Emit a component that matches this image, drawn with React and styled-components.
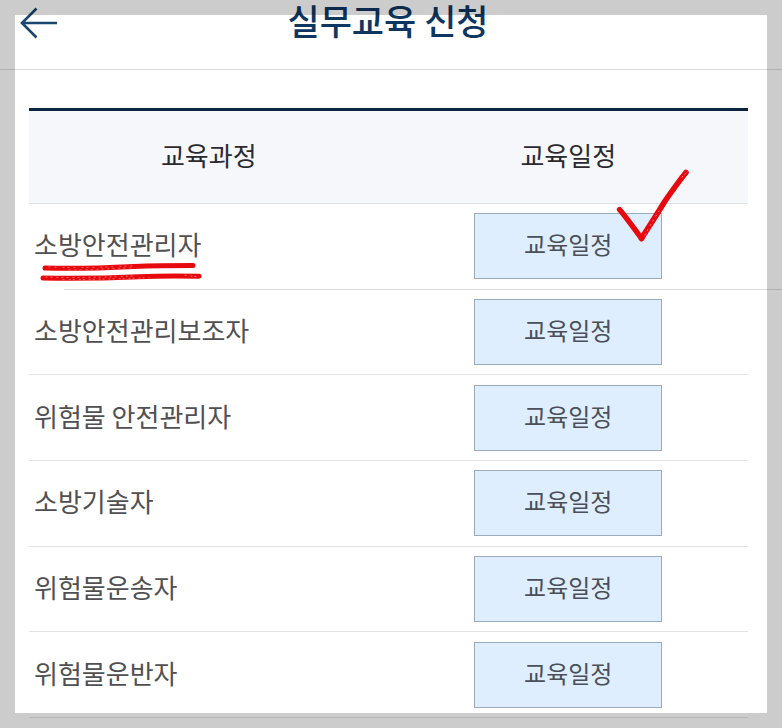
import React from 'react';
import styled, { createGlobalStyle, css } from 'styled-components';

const GlobalStyle = createGlobalStyle`
    * {
        box-sizing: border-box;
    }

    body {
        margin: 0;
        background: #fff;
        color: #505052;
        font-family: "Noto Sans CJK KR", "Noto Sans", sans-serif;
    }
`;

const Page = styled.div`
    position: relative;
    min-height: 100vh;
`;

const Frame = styled.div`
    position: absolute;
    inset: 0;
    border: 15px solid rgba(0, 0, 0, 0.2);
    pointer-events: none;
`;

const Header = styled.header`
    display: grid;
    grid-template-columns: 60px 1fr 60px;
    height: 70px;
    padding: 0 14px 0 8px;
    border-bottom: 1px solid #dcdcdc;
`;

const BackLink = styled.a`
    display: flex;
    align-items: center;
    height: 46px;
    padding-left: 11px;
    color: #1b466f;
`;

const Title = styled.h1`
    margin: 0;
    color: #0f365f;
    font-size: 35px;
    font-weight: 500;
    line-height: 40px;
    text-align: center;
`;

const Content = styled.main`
    padding: 38px 34px 10px 29px;
`;

const CourseTable = styled.table`
    width: 100%;
    height: 610px;
    table-layout: fixed;
    border-collapse: separate;
    border-spacing: 0;
    border-top: 3px solid #0b2540;
`;

const HeadCell = styled.th`
    height: 93px;
    padding: 0 0 4px;
    background: #f6f7fb;
    border-bottom: 1px solid #e0e2e5;
    color: #2b2b2f;
    font-size: 26px;
    font-weight: 400;
    line-height: 40px;
`;

const Cell = styled.td`
    position: relative;
    padding: 0 0 4px 5px;
    border-bottom: 1px solid #e2e3e4;
    font-size: 26px;
    line-height: 40px;
    white-space: nowrap;
`;

const ActionCell = styled(Cell)`
    padding: 0;
    text-align: center;
`;

const Row = styled.tr`
    ${({ $marked }) => $marked && css`
        ${Cell} {
            border-bottom-color: transparent;
        }

        ${Cell}::after {
            content: '';
            position: absolute;
            left: 35px;
            right: 0;
            bottom: -1px;
            height: 1px;
            background: #dcdddf;
        }

        ${ActionCell}::after {
            left: 0;
            right: -34px;
        }
    `}
`;

const ScheduleButton = styled.button`
    display: block;
    width: 188px;
    height: 66px;
    margin: 0 auto;
    padding: 0 0 4px;
    border: 1px solid #9aabbd;
    border-radius: 0;
    background: #dfeefe;
    color: #4b4f58;
    font-family: inherit;
    font-size: 24px;
    line-height: 36px;
    cursor: pointer;
`;

const Anchor = styled.div`
    position: relative;
`;

const UnderlineMark = styled.svg`
    position: absolute;
    top: 37px;
    left: 5px;
    pointer-events: none;
`;

const CheckMark = styled.svg`
    position: absolute;
    top: -45px;
    left: calc(50% + 44px);
    pointer-events: none;
`;

const courses = [
    { name: '소방안전관리자', marked: true },
    { name: '소방안전관리보조자' },
    { name: '위험물 안전관리자' },
    { name: '소방기술자' },
    { name: '위험물운송자' },
    { name: '위험물운반자' },
];

const Underline = () => (
    <UnderlineMark width="166" height="22" viewBox="0 0 166 22" fill="none" strokeLinecap="round" aria-hidden="true">
        <path d="M6 7C35 8 65 7 95 5.5C118 4.5 137 4.5 154 4.5" stroke="#e8090e" strokeWidth="5" />
        <path d="M4 17C32 17.5 70 17 100 15.7C126 14.7 142 15 160 15.3" stroke="#e8090e" strokeWidth="5" />
        <path d="M10 5.8C39 7.5 67 6 96 4.8" stroke="#f79a9c" strokeWidth="0.7" strokeDasharray="1 5 1 7 1 4" />
        <path d="M30 8.8C55 9 70 7.5 92 6.8" stroke="#f79a9c" strokeWidth="0.7" strokeDasharray="1 5 1 4" />
        <path d="M7 16C36 17 70 16 96 15" stroke="#f79a9c" strokeWidth="0.8" strokeDasharray="1 4 1 5 1 4" />
        <path d="M24 18.4C54 18.7 82 17.7 110 16.7M146 14.3L160 16" stroke="#f79a9c" strokeWidth="0.8" strokeDasharray="1 5 1 3" />
    </UnderlineMark>
);

const Check = () => (
    <CheckMark width="80" height="78" viewBox="0 0 80 78" fill="none" strokeLinecap="round" strokeLinejoin="round" aria-hidden="true">
        <path d="M7.5 41.5C14 49 21 59 29.5 70.5" stroke="#e8090e" strokeWidth="5.4" />
        <path d="M29.5 70.5C36 60 44 48 53 33C60 23 67 13 74 4.5" stroke="#e8090e" strokeWidth="5.6" />
        <path d="M33 67C37 59 42 51 47 43" stroke="#f79a9c" strokeWidth="0.8" strokeDasharray="1 4 1 5" />
        <path d="M70 9L75 4" stroke="#f79a9c" strokeWidth="1" strokeDasharray="1 3 1 2" />
    </CheckMark>
);

const App = () => {
    return (
        <Page>
            <GlobalStyle />
            <Header>
                <BackLink href="#back" aria-label="뒤로">
                    <svg width="40" height="32" viewBox="0 0 40 32" fill="none" stroke="currentColor" strokeWidth="2.6" aria-hidden="true">
                        <path d="M38 16H3M17.5 1.5L3 16L17.5 30.5" />
                    </svg>
                </BackLink>
                <Title>실무교육 신청</Title>
            </Header>
            <Content>
                <CourseTable>
                    <thead>
                        <tr>
                            <HeadCell scope="col">교육과정</HeadCell>
                            <HeadCell scope="col">교육일정</HeadCell>
                        </tr>
                    </thead>
                    <tbody>
                        {courses.map(({ name, marked }) => (
                            <Row key={name} $marked={marked}>
                                <Cell>
                                    <Anchor>
                                        {name}
                                        {marked && <Underline />}
                                    </Anchor>
                                </Cell>
                                <ActionCell>
                                    <Anchor>
                                        <ScheduleButton type="button">교육일정</ScheduleButton>
                                        {marked && <Check />}
                                    </Anchor>
                                </ActionCell>
                            </Row>
                        ))}
                    </tbody>
                </CourseTable>
            </Content>
            <Frame />
        </Page>
    );
};

export default App;
